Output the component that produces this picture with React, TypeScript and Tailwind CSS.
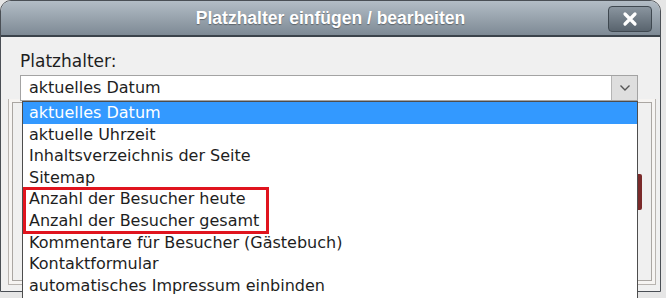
import React from 'react';

const items = [
  'aktuelles Datum',
  'aktuelle Uhrzeit',
  'Inhaltsverzeichnis der Seite',
  'Sitemap',
  'Anzahl der Besucher heute',
  'Anzahl der Besucher gesamt',
  'Kommentare für Besucher (Gästebuch)',
  'Kontaktformular',
  'automatisches Impressum einbinden',
];

export default function App() {
  return (
    <div className="w-[666px] h-[298px] overflow-hidden bg-[#e6e6e6] [font-family:'DejaVu_Sans',sans-serif]">
      {/* Dialog */}
      <div className="relative w-[661px] h-[292px] rounded-t-[11px] border-[1.5px] border-[#4a4f55] bg-[#f0f0f0] flex flex-col">
        {/* Titelleiste */}
        <div className="relative h-[36px] shrink-0 rounded-t-[10px] bg-gradient-to-b from-[#b3bdc6] to-[#7e8a95] border-b-2 border-[#3b434b] flex items-center justify-center">
          <span className="text-white font-bold text-[17.5px] [font-family:'Liberation_Sans',Arial,sans-serif] [text-shadow:0_1px_1px_rgba(0,0,0,0.35)]">
            Platzhalter einfügen / bearbeiten
          </span>
          <button className="absolute right-[8px] top-[5px] w-[44px] h-[26px] rounded-[4px] border border-[#3f4850] bg-gradient-to-b from-[#8a959f] to-[#59646e] flex items-center justify-center">
            <svg width="16" height="16" viewBox="0 0 16 16">
              <path d="M3 3 L13 13 M13 3 L3 13" stroke="white" strokeWidth="3.2" strokeLinecap="round" />
            </svg>
          </button>
        </div>

        {/* Inhalt */}
        <div className="relative flex-1 border-l-[5px] border-[#f0f0f0]">
          {/* Panel dahinter */}
          <div className="absolute left-[2px] right-[4px] top-[62px] bottom-[6px] border border-t-0 border-[#b8b4b0] shadow-[inset_0_0_0_3px_#f6f4f2,inset_0_0_0_4px_#aaa6a2]" />
          <div className="absolute right-[18px] top-[137px] w-[5px] h-[36px] bg-[#7a2a2a] rounded-r-[2px]" />

          <div className="relative pl-[14px] pt-[14px] pr-[22px]">
            <div className="text-[17px] text-[#1e1e1e] leading-[21px]">Platzhalter:</div>
            <div className="mt-[3px] h-[26px] flex border border-[#a3a3a3] bg-white">
              <div className="flex-1 pl-[8px] text-[16px] leading-[24px] text-[#1e1e1e]">aktuelles Datum</div>
              <div className="w-[26px] border-l border-[#b5b5b5] bg-[#dedede] flex items-center justify-center">
                <svg width="12" height="8" viewBox="0 0 12 8">
                  <path d="M1.5 1.5 L6 6 L10.5 1.5" fill="none" stroke="#555" strokeWidth="1.4" />
                </svg>
              </div>
            </div>

            {/* Aufgeklappte Liste */}
            <div className="absolute left-[16px] right-[22px] top-[64px] border border-[#4d4d4d] bg-white h-[200px]">
              {items.map((item, i) => (
                <div
                  key={item}
                  className={
                    'h-[21.6px] pl-[6px] text-[16px] leading-[21.6px] whitespace-nowrap ' +
                    (i === 0 ? 'bg-[#3399ff] text-white' : 'text-[#1e1e1e]')
                  }
                >
                  {item}
                </div>
              ))}
              <div className="absolute left-[0px] top-[85px] w-[246px] h-[47px] border-[3px] border-[#e0141e]" />
            </div>
          </div>
        </div>
      </div>
    </div>
  );
}
